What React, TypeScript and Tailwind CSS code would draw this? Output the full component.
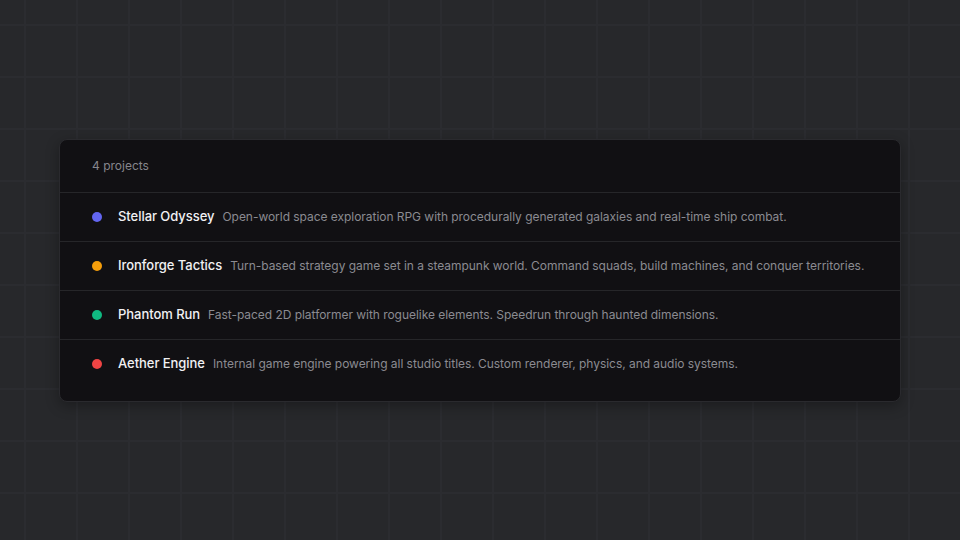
const projects = [
  {
    name: "Stellar Odyssey",
    color: "bg-[#6366f1]",
    desc: "Open-world space exploration RPG with procedurally generated galaxies and real-time ship combat.",
  },
  {
    name: "Ironforge Tactics",
    color: "bg-[#f59e0b]",
    desc: "Turn-based strategy game set in a steampunk world. Command squads, build machines, and conquer territories.",
  },
  {
    name: "Phantom Run",
    color: "bg-[#10b981]",
    desc: "Fast-paced 2D platformer with roguelike elements. Speedrun through haunted dimensions.",
  },
  {
    name: "Aether Engine",
    color: "bg-[#ef4444]",
    desc: "Internal game engine powering all studio titles. Custom renderer, physics, and audio systems.",
  },
];

export default function App() {
  return (
    <div
      className="flex h-[540px] w-[960px] items-center justify-center bg-[#27282b] bg-[linear-gradient(to_right,#2b2c30_2px,transparent_2px),linear-gradient(to_bottom,#2b2c30_2px,transparent_2px)] bg-[size:52px_52px] bg-[position:24px_24px] font-['Inter','Liberation_Sans',sans-serif]"
    >
      <div className="w-[842px] overflow-hidden rounded-lg border border-[#2a2a2e] bg-[#111013] pb-[13px] shadow-[0_4px_14px_rgba(0,0,0,0.3)]">
        {/* Header */}
        <div className="flex h-[52px] items-center px-8 text-xs text-[#86868c]">
          4 projects
        </div>

        {/* Rows */}
        {projects.map((p) => (
          <div
            key={p.name}
            className="flex h-[49px] items-center border-t border-[#262629] px-8"
          >
            <span className={`mr-4 h-2.5 w-2.5 shrink-0 rounded-full ${p.color}`} />
            <span className="mr-2 shrink-0 text-[13px] font-medium tracking-[-0.05px] text-[#f1f1f3]">
              {p.name}
            </span>
            <span className="whitespace-nowrap text-xs tracking-[-0.04px] text-[#8b8b91]">{p.desc}</span>
          </div>
        ))}
      </div>
    </div>
  );
}
